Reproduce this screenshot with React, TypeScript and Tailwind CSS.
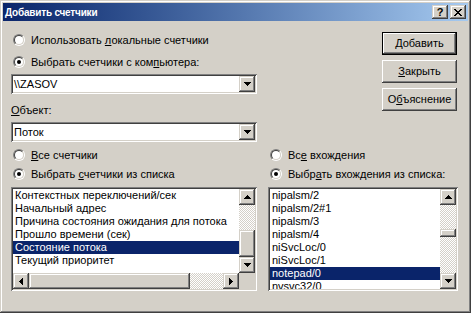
import type { ReactNode } from "react"

const raised =
  "shadow-[inset_-1px_-1px_#404040,inset_1px_1px_#fff,inset_-2px_-2px_#808080,inset_2px_2px_#d4d0c8]"
const scrollRaised =
  "shadow-[inset_-1px_-1px_#404040,inset_1px_1px_#d4d0c8,inset_-2px_-2px_#808080,inset_2px_2px_#fff]"
const sunken =
  "shadow-[inset_1px_1px_#808080,inset_-1px_-1px_#fff,inset_2px_2px_#404040,inset_-2px_-2px_#d4d0c8]"
const dither =
  "bg-[image:repeating-conic-gradient(#fff_0_25%,#d4d0c8_0_50%)] bg-[length:2px_2px]"

type Dir = "up" | "down" | "left" | "right"

function Arrow({ dir }: { dir: Dir }) {
  const vertical = dir === "up" || dir === "down"
  return (
    <svg width={vertical ? 7 : 4} height={vertical ? 4 : 7} shapeRendering="crispEdges">
      {[0, 1, 2, 3].map((i) => {
        if (dir === "down") return <rect key={i} x={i} y={i} width={7 - 2 * i} height={1} fill="#000" />
        if (dir === "up") return <rect key={i} x={i} y={3 - i} width={7 - 2 * i} height={1} fill="#000" />
        if (dir === "right") return <rect key={i} x={i} y={i} width={1} height={7 - 2 * i} fill="#000" />
        return <rect key={i} x={3 - i} y={i} width={1} height={7 - 2 * i} fill="#000" />
      })}
    </svg>
  )
}

function ScrollBtn({ dir }: { dir: Dir }) {
  return (
    <div className={`flex h-[16px] w-[16px] shrink-0 items-center justify-center bg-[#d4d0c8] ${scrollRaised}`}>
      <Arrow dir={dir} />
    </div>
  )
}

function Radio({ checked, children }: { checked?: boolean; children: ReactNode }) {
  return (
    <div className="flex h-[16px] items-center">
      <span className="ml-[2px] flex h-[12px] w-[12px] items-center justify-center rounded-full border border-t-[#808080] border-l-[#808080] border-b-white border-r-white">
        <span className="flex h-[10px] w-[10px] items-center justify-center rounded-full border border-t-[#404040] border-l-[#404040] border-b-[#d4d0c8] border-r-[#d4d0c8] bg-white">
          {checked && <span className="h-[4px] w-[4px] rounded-full bg-black" />}
        </span>
      </span>
      <span className="ml-[6px]">{children}</span>
    </div>
  )
}

const U = ({ children }: { children: ReactNode }) => <span className="underline">{children}</span>

function Combo({ value }: { value: string }) {
  return (
    <div className={`flex h-[20px] w-[246px] bg-white p-[2px] ${sunken}`}>
      <div className="flex-1 pl-[1px] leading-[16px]">{value}</div>
      <ScrollBtn dir="down" />
    </div>
  )
}

function Button({ children, def }: { children: ReactNode; def?: boolean }) {
  return (
    <div
      className={`flex h-[23px] w-[75px] items-center justify-center bg-[#d4d0c8] ${
        def
          ? "border border-black shadow-[inset_-1px_-1px_#404040,inset_1px_1px_#fff,inset_-2px_-2px_#808080]"
          : raised
      }`}
    >
      {children}
    </div>
  )
}

const counters = [
  "Контекстных переключений/сек",
  "Начальный адрес",
  "Причина состояния ожидания для потока",
  "Прошло времени (сек)",
  "Состояние потока",
  "Текущий приоритет",
]

const instances = [
  "nipalsm/2",
  "nipalsm/2#1",
  "nipalsm/3",
  "nipalsm/4",
  "niSvcLoc/0",
  "niSvcLoc/1",
  "notepad/0",
  "nvsvc32/0",
]

function Rows({ items, selected }: { items: string[]; selected: number }) {
  return (
    <div className="flex-1 overflow-hidden bg-white">
      {items.map((t, i) => (
        <div
          key={t}
          className={`h-[13px] whitespace-nowrap pl-[2px] leading-[13px] ${
            i === selected ? "bg-[#0a246a] text-white" : ""
          }`}
        >
          {t}
        </div>
      ))}
    </div>
  )
}

export default function App() {
  return (
    <div className="flex h-[313px] w-[471px] flex-col bg-[#d4d0c8] p-[3px] font-['Liberation_Sans',Arial,sans-serif] text-[11px] text-black shadow-[inset_-1px_-1px_#404040,inset_1px_1px_#d4d0c8,inset_-2px_-2px_#808080,inset_2px_2px_#fff]">
      {/* title bar */}
      <div className="flex h-[18px] items-center bg-linear-to-r from-[#0a246a] to-[#a6caf0] pl-[2px] pr-[2px]">
        <span className="text-[10px] font-bold tracking-[-0.2px] text-white">Добавить счетчики</span>
        <div className={`ml-auto flex h-[14px] w-[16px] items-center justify-center bg-[#d4d0c8] text-[11px] font-bold leading-none ${scrollRaised}`}>
          ?
        </div>
        <div className={`ml-[2px] flex h-[14px] w-[16px] items-center justify-center bg-[#d4d0c8] ${scrollRaised}`}>
          <svg width="8" height="7" shapeRendering="crispEdges">
            {[0, 1, 2, 3, 4, 5, 6].map((i) => (
              <g key={i} fill="#000">
                <rect x={i} y={i} width={2} height={1} />
                <rect x={6 - i} y={i} width={2} height={1} />
              </g>
            ))}
          </svg>
        </div>
      </div>

      {/* client */}
      <div className="flex flex-1 flex-col pl-[8px] pt-[11px]">
        <div className="flex">
          <div className="flex w-[246px] flex-col">
            <Radio>
              Использовать <U>л</U>окальные счетчики
            </Radio>
            <div className="mt-[6px]">
              <Radio checked>
                Выбрать счетчики с ком<U>п</U>ьютера:
              </Radio>
            </div>
            <div className="mt-[4px]">
              <Combo value={"\\\\ZASOV"} />
            </div>
            <div className="mt-[9px] h-[14px] leading-[14px]">
              <U>О</U>бъект:
            </div>
            <div className="mt-[5px]">
              <Combo value="Поток" />
            </div>
          </div>
          <div className="ml-[125px] flex flex-col gap-[5px]">
            <Button def>
              <U>Д</U>обавить
            </Button>
            <Button>
              <U>З</U>акрыть
            </Button>
            <Button>
              О<U>б</U>ъяснение
            </Button>
          </div>
        </div>

        <div className="mt-[5px] flex">
          {/* left: counters */}
          <div className="flex w-[246px] flex-col">
            <Radio>
              <U>В</U>се счетчики
            </Radio>
            <div className="mt-[3px]">
              <Radio checked>
                Выбрать <U>с</U>четчики из списка
              </Radio>
            </div>
            <div className={`mt-[5px] flex h-[104px] flex-col bg-white p-[2px] ${sunken}`}>
              <div className="flex h-[84px]">
                <Rows items={counters} selected={4} />
                <div className="flex w-[16px] flex-col">
                  <ScrollBtn dir="up" />
                  <div className={`h-[25px] ${dither}`} />
                  <div className={`h-[27px] bg-[#d4d0c8] ${scrollRaised}`} />
                  <ScrollBtn dir="down" />
                </div>
              </div>
              <div className="flex h-[16px]">
                <ScrollBtn dir="left" />
                <div className={`w-[161px] bg-[#d4d0c8] ${scrollRaised}`} />
                <div className={`flex-1 ${dither}`} />
                <ScrollBtn dir="right" />
                <div className="w-[16px] bg-[#d4d0c8]" />
              </div>
            </div>
          </div>

          {/* right: instances */}
          <div className="ml-[11px] flex w-[190px] flex-col">
            <Radio>
              Вс<U>е</U> вхождения
            </Radio>
            <div className="mt-[3px]">
              <Radio checked>
                Выбр<U>а</U>ть вхождения из списка:
              </Radio>
            </div>
            <div className={`mt-[5px] flex h-[104px] bg-white p-[2px] ${sunken}`}>
              <Rows items={instances} selected={6} />
              <div className="flex w-[16px] flex-col">
                <ScrollBtn dir="up" />
                <div className={`h-[24px] ${dither}`} />
                <div className={`h-[8px] bg-[#d4d0c8] ${scrollRaised}`} />
                <div className={`flex-1 ${dither}`} />
                <ScrollBtn dir="down" />
              </div>
            </div>
          </div>
        </div>
      </div>
    </div>
  )
}
